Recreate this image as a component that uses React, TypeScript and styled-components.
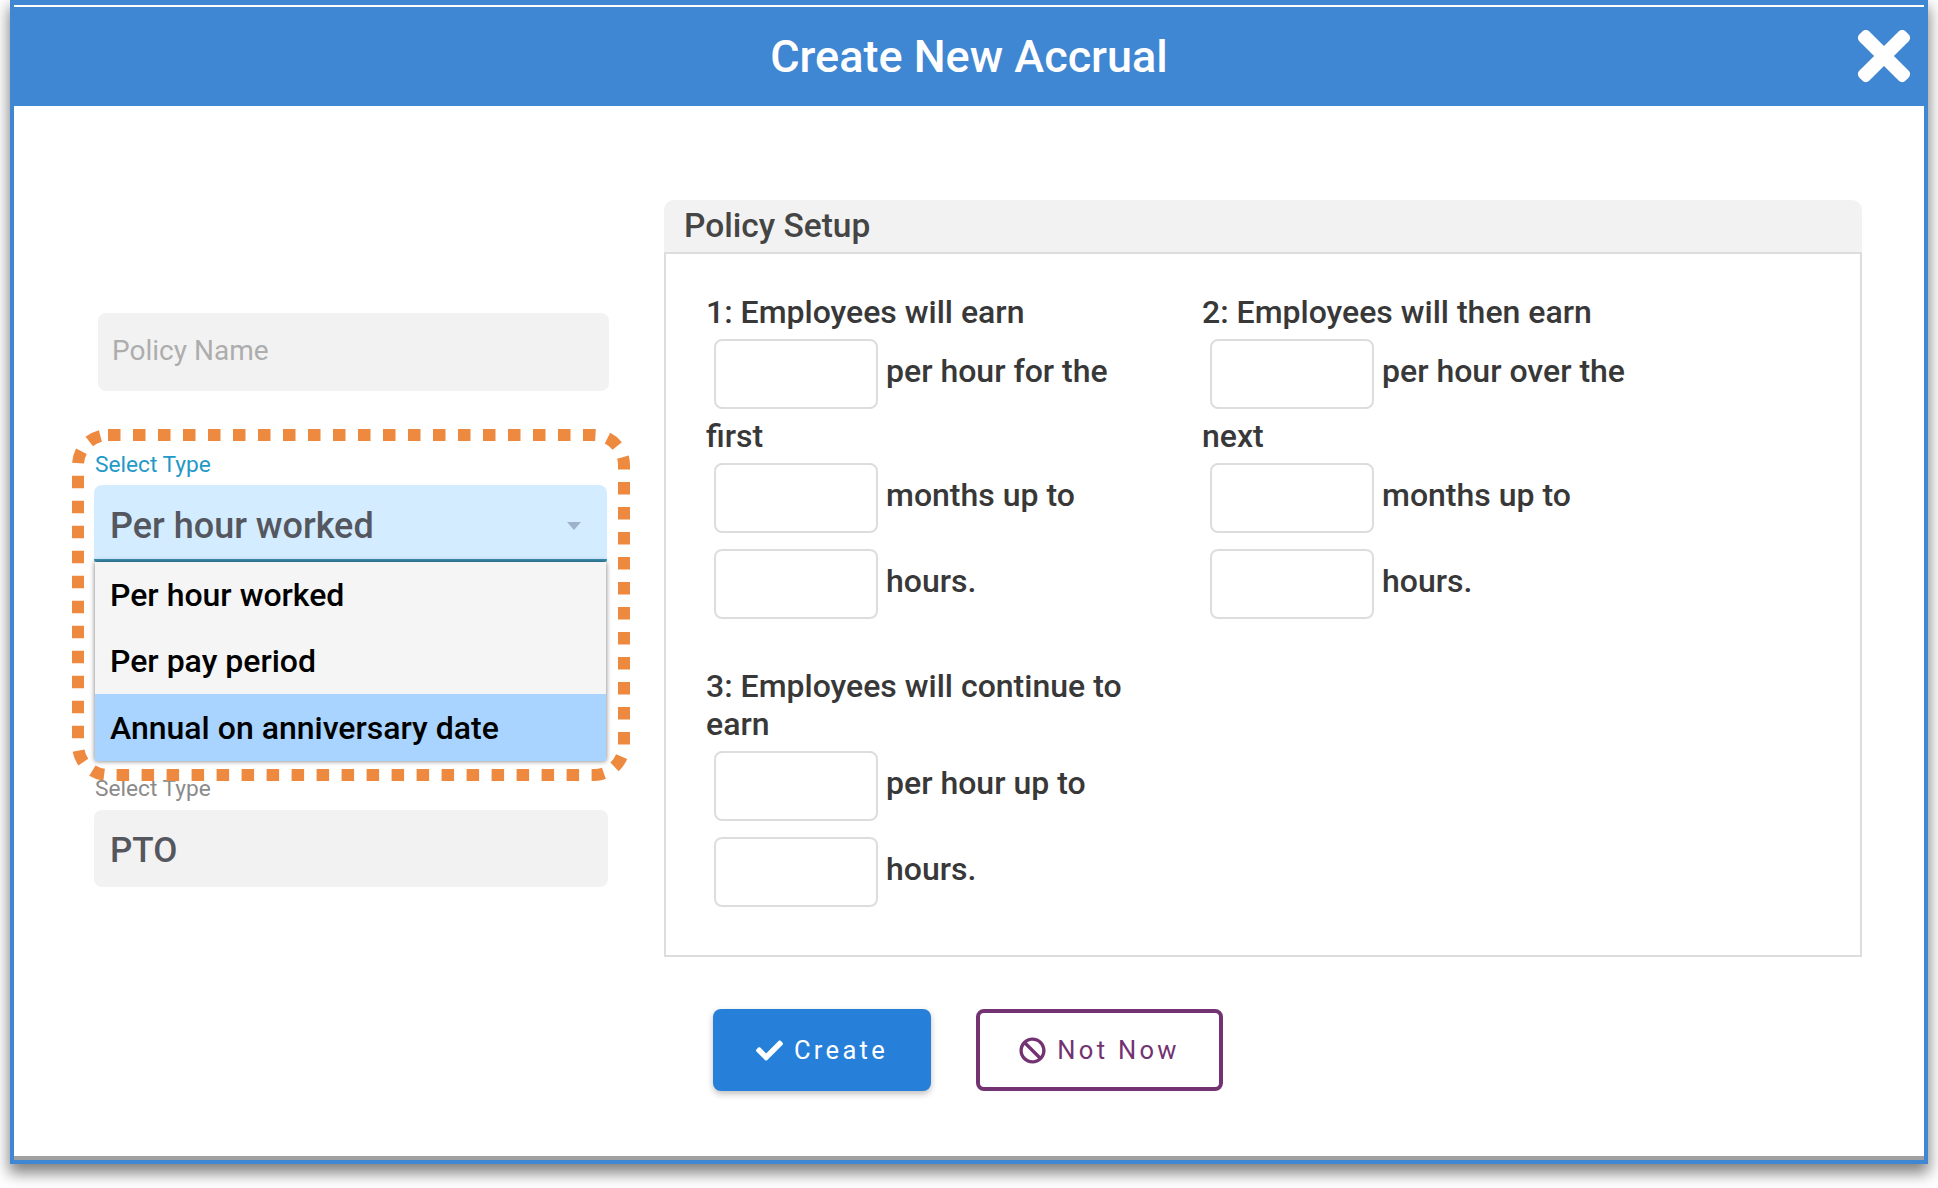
import React from "react";
import styled, { createGlobalStyle } from "styled-components";
import { FaBan, FaCheck, FaTimes } from "react-icons/fa";

const Global = createGlobalStyle`
  html, body { margin: 0; padding: 0; background: #fff; }
  body { font-family: Roboto, "Liberation Sans", sans-serif; min-height: 1188px; }
  html { overflow: hidden; }
  * { box-sizing: border-box; }
`;

const Modal = styled.div`
  margin-left: 10px;
  width: 1918px;
  height: 1164px;
  border: 4px solid #3f86d3;
  border-top-width: 5px;
  background: #fff;
  display: flex;
  flex-direction: column;
  box-shadow: 0 8px 14px 1px rgba(0, 0, 0, 0.5);
`;
const TopLine = styled.div`
  height: 2px;
  background: #fff;
`;
const Header = styled.header`
  position: relative;
  height: 99px;
  background: #3f86d3;
  display: flex;
  align-items: center;
  justify-content: center;
  color: #fff;
`;
const Title = styled.h1`
  margin: 0;
  font-size: 45px;
  font-weight: 500;
`;
const Close = styled.button`
  position: absolute;
  right: 6px;
  top: 11px;
  padding: 0;
  border: 0;
  background: none;
  color: #fff;
  display: flex;
  svg { display: block; width: 68px; height: 76px; }
`;
const Body = styled.div`
  flex: 1;
  border-bottom: 4px solid #a0a0a0;
  padding: 94px 0 0 80px;
`;
const Top = styled.div`
  display: flex;
  gap: 55px;
`;
const LeftCol = styled.div`
  position: relative;
  width: 515px;
  padding-top: 113px;
`;
const NameInput = styled.input`
  display: block;
  margin-left: 4px;
  width: 511px;
  height: 78px;
  padding: 0 14px 4px;
  border: 0;
  border-radius: 8px;
  background: #f2f2f2;
  font: 400 28px Roboto, sans-serif;
  &::placeholder { color: #adadad; opacity: 1; }
`;
const FieldLabel = styled.div<{ $active?: boolean }>`
  font-size: 22.7px;
  line-height: 26px;
  padding-left: 1px;
  color: ${(p) => (p.$active ? "#2299c8" : "#8a8a8a")};
`;
const SelectLabelWrap = styled.div`
  margin-top: 61px;
  margin-bottom: 7px;
`;
const SecondLabelWrap = styled.div`
  margin-top: 15px;
  margin-bottom: 8px;
`;
const SelectBox = styled.div`
  width: 513px;
  height: 77px;
  padding: 8px 16px 0;
  background: #d4ecff;
  border-bottom: 3px solid #3a93b8;
  border-radius: 8px 8px 2px 2px;
  display: flex;
  align-items: center;
  justify-content: space-between;
  color: #55575f;
  font-size: 36px;
  font-weight: 500;
`;
const Caret = styled.span`
  width: 0;
  height: 0;
  margin-right: 10px;
  border-left: 7px solid transparent;
  border-right: 7px solid transparent;
  border-top: 8px solid #9fb2cc;
`;
const Menu = styled.ul`
  list-style: none;
  margin: 0 0 0 1px;
  padding: 0;
  width: 511px;
  height: 199px;
  background: #f5f5f5;
  box-shadow: 0 0 5px rgba(0, 0, 0, 0.55);
`;
const MenuItem = styled.li<{ $on?: boolean }>`
  height: ${(p) => (p.$on ? 67 : 66)}px;
  padding: 0 15px;
  display: flex;
  align-items: center;
  font-size: 32px;
  font-weight: 500;
  color: #000;
  background: ${(p) => (p.$on ? "#a8d4ff" : "transparent")};
`;
const PtoBox = styled.div`
  width: 514px;
  height: 77px;
  padding: 4px 16px 0;
  border-radius: 8px;
  background: #f2f2f2;
  display: flex;
  align-items: center;
  color: #55575f;
  font-size: 35px;
  font-weight: 500;
`;
const Highlight = styled.svg`
  position: absolute;
  left: -32px;
  top: 229px;
  width: 580px;
  height: 372px;
  pointer-events: none;
  rect {
    fill: none;
    stroke: #ed8a3f;
    stroke-width: 12;
    stroke-dasharray: 12.5 12.5;
  }
`;
const Panel = styled.section`
  width: 1198px;
  height: 757px;
  display: flex;
  flex-direction: column;
`;
const PanelHead = styled.h2`
  margin: 0;
  height: 52px;
  padding: 0 20px 2px;
  background: #f2f2f2;
  border-radius: 10px 10px 0 0;
  display: flex;
  align-items: center;
  color: #454545;
  font-size: 33.5px;
  font-weight: 500;
`;
const PanelBody = styled.div`
  flex: 1;
  border: 2px solid #ddd;
  padding: 39px 0 0 40px;
  display: grid;
  grid-template-columns: 496px 496px;
  grid-template-rows: 325px auto;
  row-gap: 49px;
  align-content: start;
  color: #383838;
  font-size: 32px;
  font-weight: 500;
  line-height: 38px;
`;
const Group = styled.div`
  display: flex;
  flex-direction: column;
  align-items: flex-start;
`;
const Heading = styled.div`
  width: 430px;
`;
const Row = styled.div<{ $gap: number }>`
  display: flex;
  align-items: center;
  gap: 8px;
  margin: ${(p) => p.$gap}px 0 0 8px;
  span { position: relative; top: -3px; }
`;
const Line = styled.div`
  margin-top: 8px;
`;
const Box = styled.input`
  width: 164px;
  height: 70px;
  border: 2px solid #ddd;
  border-radius: 8px;
  background: #fff;
`;
const Actions = styled.div`
  display: flex;
  gap: 45px;
  margin: 52px 0 0 619px;
`;
const Btn = styled.button<{ $primary?: boolean }>`
  width: ${(p) => (p.$primary ? 218 : 247)}px;
  height: 82px;
  border-radius: 8px;
  border: ${(p) => (p.$primary ? "0" : "4px solid #733272")};
  background: ${(p) => (p.$primary ? "#2680d9" : "#fff")};
  color: ${(p) => (p.$primary ? "#fff" : "#733272")};
  box-shadow: ${(p) => (p.$primary ? "0 3px 6px rgba(0,0,0,0.25)" : "none")};
  display: flex;
  align-items: center;
  justify-content: center;
  gap: 11px;
  font: 400 25.5px Roboto, sans-serif;
  letter-spacing: 3.3px;
  svg { width: 27px; height: 27px; }
`;

const Field = ({ gap, children }: { gap: number; children: React.ReactNode }) => (
  <Row $gap={gap}>
    <Box aria-label="value" />
    <span>{children}</span>
  </Row>
);

export default function App() {
  return (
    <>
      <Global />
      <Modal>
        <TopLine />
        <Header>
          <Title>Create New Accrual</Title>
          <Close aria-label="Close"><FaTimes /></Close>
        </Header>
        <Body>
          <Top>
            <LeftCol>
              <NameInput placeholder="Policy Name" />
              <SelectLabelWrap><FieldLabel $active>Select Type</FieldLabel></SelectLabelWrap>
              <SelectBox>Per hour worked<Caret /></SelectBox>
              <Menu>
                <MenuItem>Per hour worked</MenuItem>
                <MenuItem>Per pay period</MenuItem>
                <MenuItem $on>Annual on anniversary date</MenuItem>
              </Menu>
              <SecondLabelWrap><FieldLabel>Select Type</FieldLabel></SecondLabelWrap>
              <PtoBox>PTO</PtoBox>
              <Highlight viewBox="0 0 580 372">
                <rect x="16" y="6" width="546" height="340" rx="30" />
              </Highlight>
            </LeftCol>
            <Panel>
              <PanelHead>Policy Setup</PanelHead>
              <PanelBody>
                <Group>
                  <Heading>1: Employees will earn</Heading>
                  <Field gap={8}>per hour for the</Field>
                  <Line>first</Line>
                  <Field gap={8}>months up to</Field>
                  <Field gap={16}>hours.</Field>
                </Group>
                <Group>
                  <Heading>2: Employees will then earn</Heading>
                  <Field gap={8}>per hour over the</Field>
                  <Line>next</Line>
                  <Field gap={8}>months up to</Field>
                  <Field gap={16}>hours.</Field>
                </Group>
                <Group>
                  <Heading>3: Employees will continue to earn</Heading>
                  <Field gap={8}>per hour up to</Field>
                  <Field gap={16}>hours.</Field>
                </Group>
              </PanelBody>
            </Panel>
          </Top>
          <Actions>
            <Btn $primary><FaCheck />Create</Btn>
            <Btn><FaBan />Not Now</Btn>
          </Actions>
        </Body>
      </Modal>
    </>
  );
}
